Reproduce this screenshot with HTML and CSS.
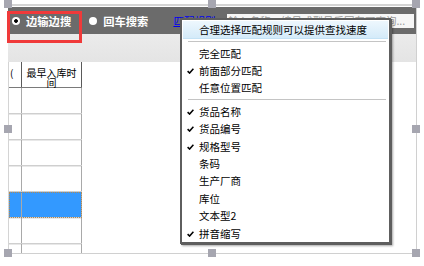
FILE: index.html
```html
<!DOCTYPE html>
<html lang="zh-CN">
<head>
<meta charset="utf-8">
<title>匹配规则</title>
<link rel="stylesheet" href="styles.css">
</head>
<body>
<div class="stage">
  <div class="frame">
    <div class="toolbar">
      <label class="radio on"><span class="dot"></span>边输边搜</label>
      <label class="radio second"><span class="dot"></span>回车搜索</label>
      <a class="rule">匹配规则</a>
      <div class="search">输入名称、编号或型号后回车可查询...</div>
    </div>
    <div class="band"></div>
    <div class="grid">
      <div class="row head"><div class="c1">(</div><div class="c2">最早入库时间</div></div>
      <div class="row"><div class="c1"></div><div class="c2"></div></div>
      <div class="row"><div class="c1"></div><div class="c2"></div></div>
      <div class="row"><div class="c1"></div><div class="c2"></div></div>
      <div class="row"><div class="c1"></div><div class="c2"></div></div>
      <div class="row sel"><div class="c1"></div><div class="c2"></div></div>
      <div class="row"><div class="c1"></div><div class="c2"></div></div>
      <div class="row fill"><div class="c1"></div><div class="c2"></div></div>
    </div>
  </div>

  <span class="handle h-tl"></span>
  <span class="handle h-tm"></span>
  <span class="handle h-tr"></span>
  <span class="handle h-ml"></span>
  <span class="handle h-mr"></span>
  <span class="handle h-bl"></span>
  <span class="handle h-bm"></span>
  <span class="handle h-br"></span>

  <div class="mark"></div>

  <div class="menu">
    <div class="item hot"><span class="ck"></span><span>合理选择匹配规则可以提供查找速度</span></div>
    <div class="sep"></div>
    <div class="item"><span class="ck"></span><span>完全匹配</span></div>
    <div class="item"><span class="ck"><svg viewBox="0 0 7 6" width="7" height="6"><path d="M0.6 3.1 L2.6 5.1 L6.4 0.8" fill="none" stroke="#000" stroke-width="1.5"/></svg></span><span>前面部分匹配</span></div>
    <div class="item"><span class="ck"></span><span>任意位置匹配</span></div>
    <div class="sep"></div>
    <div class="item"><span class="ck"><svg viewBox="0 0 7 6" width="7" height="6"><path d="M0.6 3.1 L2.6 5.1 L6.4 0.8" fill="none" stroke="#000" stroke-width="1.5"/></svg></span><span>货品名称</span></div>
    <div class="item"><span class="ck"><svg viewBox="0 0 7 6" width="7" height="6"><path d="M0.6 3.1 L2.6 5.1 L6.4 0.8" fill="none" stroke="#000" stroke-width="1.5"/></svg></span><span>货品编号</span></div>
    <div class="item"><span class="ck"><svg viewBox="0 0 7 6" width="7" height="6"><path d="M0.6 3.1 L2.6 5.1 L6.4 0.8" fill="none" stroke="#000" stroke-width="1.5"/></svg></span><span>规格型号</span></div>
    <div class="item"><span class="ck"></span><span>条码</span></div>
    <div class="item"><span class="ck"></span><span>生产厂商</span></div>
    <div class="item"><span class="ck"></span><span>库位</span></div>
    <div class="item"><span class="ck"></span><span>文本型2</span></div>
    <div class="item"><span class="ck"><svg viewBox="0 0 7 6" width="7" height="6"><path d="M0.6 3.1 L2.6 5.1 L6.4 0.8" fill="none" stroke="#000" stroke-width="1.5"/></svg></span><span>拼音缩写</span></div>
  </div>
</div>
</body>
</html>
```

FILE: styles.css
```css
html, body {
  margin: 0;
  padding: 0;
  background: #fff;
}

body {
  font-family: "Noto Sans CJK SC", "Noto Sans", sans-serif;
  color: #000;
}

.stage {
  position: relative;
  width: 424px;
  height: 266px;
  overflow: hidden;
}

/* design frame */
.frame {
  margin: 4px 0 0 8px;
  width: 409px;
  height: 250px;
  box-sizing: border-box;
  border-top: 2px solid #d4d4d4;
  border-right: 1px solid #d0d0d0;
  border-bottom: 1px solid #d0d0d0;
  padding-top: 1px;
  display: flex;
  flex-direction: column;
}

.toolbar {
  height: 27px;
  flex: none;
  background: #6b6b6b;
  display: flex;
  align-items: center;
  padding-left: 4px;
  padding-right: 2px;
}

.radio {
  display: flex;
  align-items: center;
  color: #fff;
  font-weight: bold;
  font-size: 11.3px;
  line-height: 14px;
  white-space: nowrap;
}

.radio .dot {
  width: 8px;
  height: 8px;
  border-radius: 50%;
  background: #fff;
  margin-right: 6px;
  flex: none;
}

.radio.on .dot {
  background: radial-gradient(circle, #000 0 1.5px, #fff 2.2px);
}

.radio.second {
  margin-left: 18px;
}

.rule {
  margin-left: 25px;
  font-size: 10.5px;
  line-height: 14px;
  color: #0000f0;
  text-decoration: underline;
  white-space: nowrap;
}

.search {
  margin-left: 12px;
  flex: 1;
  height: 14px;
  background: #f6f6f6;
  color: #9a9a9a;
  font-size: 10.5px;
  line-height: 14px;
  padding-left: 1px;
  white-space: nowrap;
  overflow: hidden;
}

.band {
  height: 28px;
  flex: none;
  background: linear-gradient(#ebebeb, #e4e4e4);
}

/* grid */
.grid {
  flex: 1;
  width: 74px;
  display: flex;
  flex-direction: column;
  border-left: 1px solid #d4d4d4;
  box-sizing: border-box;
}

.row {
  display: flex;
  height: 26px;
  flex: none;
  box-sizing: border-box;
  border-bottom: 1px solid #cfcfcf;
  box-shadow: 0 1px 0 #e8e8e8;
}

.row .c1 {
  width: 13px;
  box-sizing: border-box;
  border-right: 1px solid #a9a9a9;
}

.row .c2 {
  width: 60px;
  box-sizing: border-box;
  border-right: 1px solid #a9a9a9;
}

.row.head {
  border-bottom: 1px solid #7a7a7a;
  box-shadow: none;
  font-size: 10px;
  line-height: 10px;
}

.row.head .c1 {
  border-right-color: #5a5a5a;
  padding: 6px 0 0 1px;
}

.row.head .c2 {
  border-right-color: #5a5a5a;
  text-align: center;
  padding: 6px 1px 0;
}

.row.sel {
  background: #3399ff;
  outline: 1px dotted #b08a55;
  outline-offset: -1px;
}

.row.fill {
  flex: 1;
  border-bottom: none;
  box-shadow: none;
}

/* selection handles */
.handle {
  position: absolute;
  width: 8px;
  height: 8px;
  background: #a6a6b0;
}
.h-tl { left: 4px; top: 0; }
.h-tm { left: 208px; top: 0; }
.h-tr { left: 412px; top: 0; }
.h-ml { left: 4px; top: 125px; }
.h-mr { left: 412px; top: 125px; }
.h-bl { left: 4px; top: 249px; }
.h-bm { left: 208px; top: 249px; }
.h-br { left: 412px; top: 249px; }

/* red annotation */
.mark {
  position: absolute;
  left: 7px;
  top: 11px;
  width: 75px;
  height: 32px;
  box-sizing: border-box;
  border: 3px solid #f03a3a;
}

/* context menu */
.menu {
  position: absolute;
  left: 180px;
  top: 18px;
  width: 211px;
  box-sizing: border-box;
  background: #fff;
  border: 2px solid #5e5e5e;
  box-shadow: 1px 1px 0 #5e5e5e, 2px 2px 2px rgba(0, 0, 0, 0.35);
  padding: 1px 1px 0;
  font-size: 10.5px;
}

.item {
  display: flex;
  align-items: center;
  height: 17.4px;
  line-height: 14px;
  white-space: nowrap;
}

.item .ck {
  width: 16px;
  padding-left: 4px;
  box-sizing: border-box;
  flex: none;
  display: flex;
  align-items: center;
}

.item.hot {
  height: 18px;
  background: linear-gradient(#eef7fd, #d3eaf9);
  box-shadow: inset 0 -1px 0 #c4e2f5;
}

.sep {
  height: 6px;
  margin: 0 2px 0 5px;
  background: linear-gradient(transparent 2px, #c4c4c4 2px, #c4c4c4 3px, #fff 3px);
}
```
